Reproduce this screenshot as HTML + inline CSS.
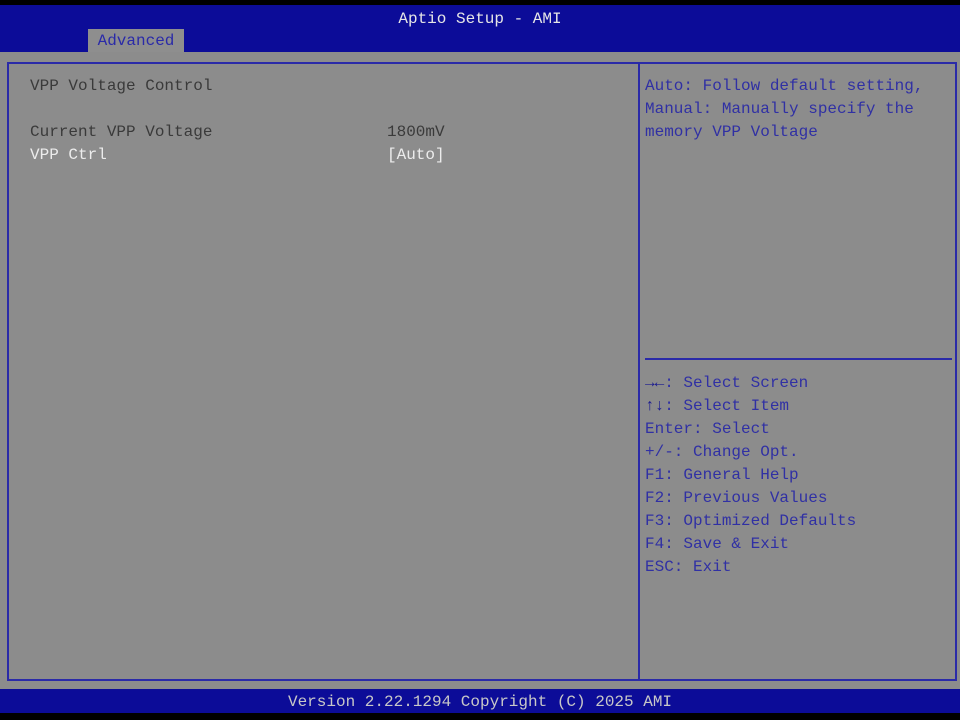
<!DOCTYPE html>
<html><head><style>
body{margin:0;width:960px;height:720px;background:#000;position:relative;overflow:hidden;font-family:"Liberation Mono",monospace;font-size:16px}
div{position:absolute;white-space:pre}
.t{line-height:23px}
</style></head><body>
<div style="left:0;top:5px;width:960px;height:47px;background:#0c0c98"></div>
<div style="left:0;top:10px;width:960px;text-align:center;color:#e6e6e6">Aptio Setup - AMI</div>
<div style="left:88px;top:29px;width:96px;height:23px;background:#8e8e8e;color:#2a2aa8;text-align:center;line-height:24px">Advanced</div>
<div style="left:0;top:52px;width:960px;height:637px;background:#8c8c8c"></div>
<div style="left:7px;top:62px;width:946px;height:615px;border:2px solid #2a2aa8"></div>
<div style="left:638px;top:62px;width:2px;height:617px;background:#2a2aa8"></div>
<div style="left:645px;top:358px;width:307px;height:2px;background:#2a2aa8"></div>
<div class="t" style="left:30px;top:75px;color:#3a3a3a">VPP Voltage Control</div>
<div class="t" style="left:30px;top:121px;color:#3a3a3a">Current VPP Voltage</div>
<div class="t" style="left:387px;top:121px;color:#3a3a3a">1800mV</div>
<div class="t" style="left:30px;top:144px;color:#ececec">VPP Ctrl</div>
<div class="t" style="left:387px;top:144px;color:#ececec">[Auto]</div>
<div class="t" style="left:645px;top:75px;color:#3030a4">Auto: Follow default setting,
Manual: Manually specify the
memory VPP Voltage</div>
<div class="t" style="left:645px;top:372px;color:#3030a4"><span style="color:#1a1a90">→←</span>: Select Screen
<span style="color:#1a1a90">↑↓</span>: Select Item
Enter: Select
+/-: Change Opt.
F1: General Help
F2: Previous Values
F3: Optimized Defaults
F4: Save &amp; Exit
ESC: Exit</div>
<div style="left:0;top:689px;width:960px;height:24px;background:#0c0c98"></div>
<div style="left:0;top:693px;width:960px;text-align:center;color:#c8c8c8">Version 2.22.1294 Copyright (C) 2025 AMI</div>
</body></html>
